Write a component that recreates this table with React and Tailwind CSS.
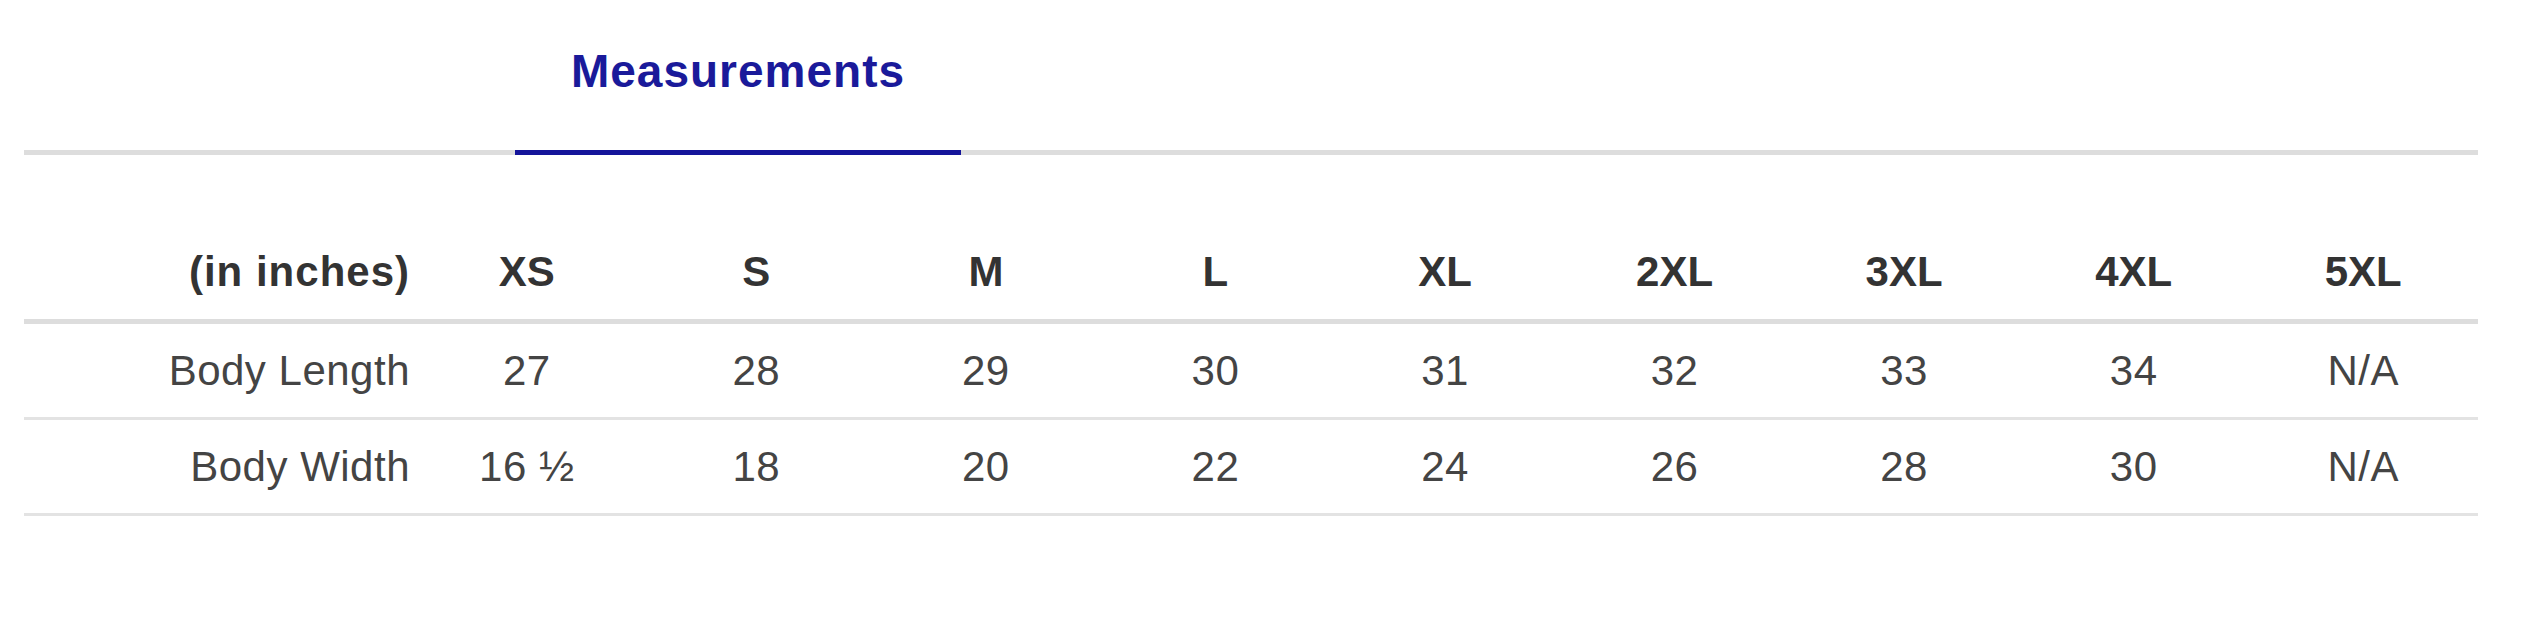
import React from 'react';

const SIZES = ['XS', 'S', 'M', 'L', 'XL', '2XL', '3XL', '4XL', '5XL'];

const ROWS = [
  { label: 'Body Length', values: ['27', '28', '29', '30', '31', '32', '33', '34', 'N/A'] },
  { label: 'Body Width', values: ['16 ½', '18', '20', '22', '24', '26', '28', '30', 'N/A'] },
];

const GRID = 'grid grid-cols-[388px_repeat(9,minmax(0,1fr))] items-center';

export default function App() {
  return (
    <div className="w-[2525px] h-[622px] bg-white pl-[24px] pr-[47px] font-['Liberation_Sans',Arial,sans-serif]">
      {/* Tabs */}
      <div className="flex border-b-[5px] border-[#dddddd]">
        <div className="ml-[491px] w-[446px] h-[155px] -mb-[5px] border-b-[5px] border-[#14149a] flex justify-center pt-[46px]">
          <span className="text-[46px] leading-[50px] font-bold tracking-[1px] text-[#1a1a9a]">Measurements</span>
        </div>
      </div>

      {/* Size table */}
      <div className="text-[42px] leading-[48px]">
        <div className={`${GRID} pt-[93px] pb-[23px] border-b-[5px] border-[#dddddd] font-bold text-[#333333]`}>
          <div className="text-right pr-[2px] tracking-[1px]">(in inches)</div>
          {SIZES.map((s) => (
            <div key={s} className="text-center">{s}</div>
          ))}
        </div>

        {ROWS.map((row) => (
          <div key={row.label} className={`${GRID} pt-[23px] pb-[22px] border-b-[3px] border-[#e3e3e3] text-[#444444] tracking-[0.5px]`}>
            <div className="text-right pr-[2px]">{row.label}</div>
            {row.values.map((v, i) => (
              <div key={i} className="text-center">{v}</div>
            ))}
          </div>
        ))}
      </div>
    </div>
  );
}
